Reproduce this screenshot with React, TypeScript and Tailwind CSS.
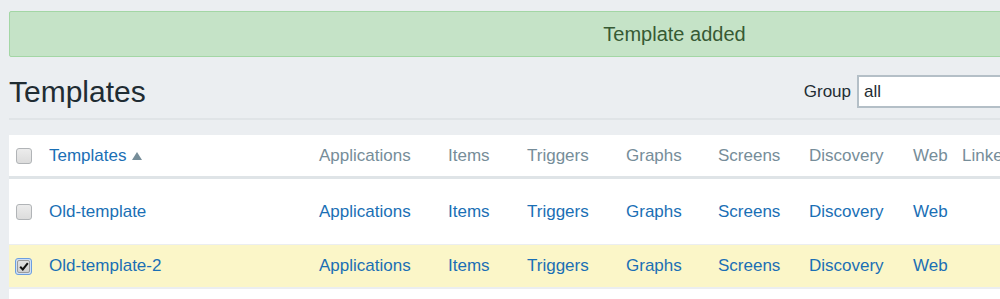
import React from 'react';

const cols = 'grid grid-cols-[40px_270px_129px_79px_99px_92px_91px_104px_49px_1fr] items-center';

function Checkbox({ checked = false }: { checked?: boolean }) {
  if (checked) {
    return (
      <div className="w-[17px] h-[17px] rounded-[3px] border border-[#6c9ee0] bg-[#cfdff5] flex items-center justify-center -ml-[1px]">
        <div className="w-[13px] h-[13px] rounded-[2px] border border-[#9a9a9a] bg-gradient-to-b from-[#e2e2e2] to-[#d0d0d0] flex items-center justify-center">
          <svg width="10" height="9" viewBox="0 0 10 9">
            <path d="M1.2 4.8 L3.8 7.4 L8.8 1.2" fill="none" stroke="#111" strokeWidth="2" />
          </svg>
        </div>
      </div>
    );
  }
  return (
    <div className="w-[16px] h-[16px] rounded-[3px] border border-[#b1b4b7] bg-gradient-to-b from-[#ececec] to-[#dcdcdc]" />
  );
}

export default function App() {
  const links = ['Applications', 'Items', 'Triggers', 'Graphs', 'Screens', 'Discovery', 'Web'];

  return (
    <div className="w-screen h-[299px] overflow-hidden bg-[#ebeef1] font-['Liberation_Sans',Arial,sans-serif]">
      <div className="w-[1349px] px-[9px] pt-[11px]">
        <div className="h-[46px] rounded-[2px] border border-[#a3d6a5] bg-[#c5e3c7] flex items-center justify-center text-[20px] text-[#375a34]">
          Template added
        </div>

        <div className="h-[63px] pt-[8px] flex items-center border-b-2 border-[#e0e4e7]">
          <h1 className="text-[30px] leading-none text-[#1f2c33]">Templates</h1>
          <div className="ml-auto flex items-center gap-[6px]">
            <span className="text-[17px] text-[#1f2c33]">Group</span>
            <div className="w-[483px] h-[33px] border-2 border-[#b4bfc7] bg-white flex items-center px-[5px] text-[17px] text-[#1f2c33]">
              all
            </div>
          </div>
        </div>

        <div className="mt-[15px] bg-white text-[17px]">
          <div className={`${cols} h-[44px] border-b-[3px] border-[#dfe4e7] text-[#768d99]`}>
            <div className="pl-[7px]"><Checkbox /></div>
            <div className="flex items-center text-[#1a6fb5]">
              Templates
              <svg className="ml-[6px]" width="10" height="8" viewBox="0 0 10 8">
                <path d="M5 0 L10 8 L0 8 Z" fill="#768d99" />
              </svg>
            </div>
            {links.map((l) => (
              <div key={l}>{l}</div>
            ))}
            <div className="whitespace-nowrap">Linked templates</div>
          </div>

          <div className={`${cols} h-[66px] border-b border-[#ebeef0] text-[#1a6fb5]`}>
            <div className="pl-[7px]"><Checkbox /></div>
            <div>Old-template</div>
            {links.map((l) => (
              <div key={l}>{l}</div>
            ))}
            <div />
          </div>

          <div className={`${cols} h-[44px] bg-[#fbf6c8] border-b-2 border-[#ebeef0] text-[#1a6fb5]`}>
            <div className="pl-[7px]"><Checkbox checked /></div>
            <div>Old-template-2</div>
            {links.map((l) => (
              <div key={l}>{l}</div>
            ))}
            <div />
          </div>

          <div className="h-[20px]" />
        </div>
      </div>
    </div>
  );
}
